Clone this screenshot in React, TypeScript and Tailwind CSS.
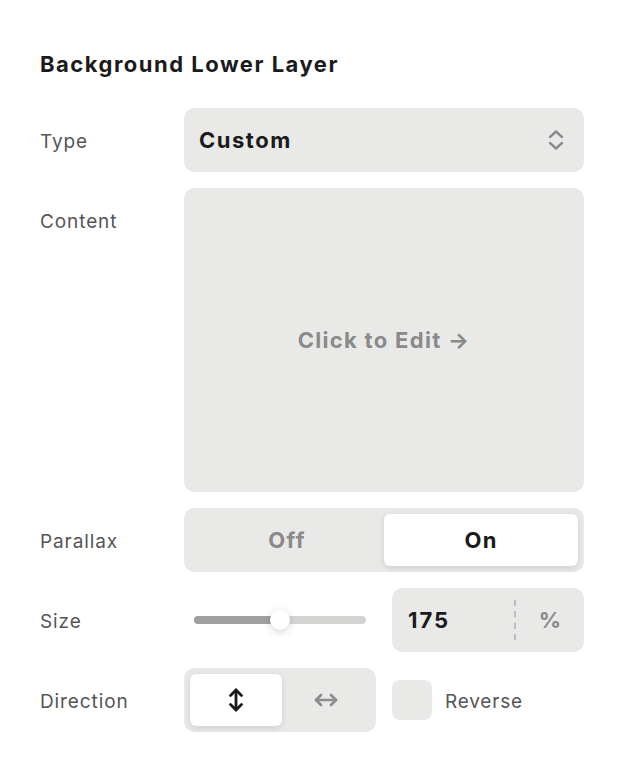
import React from "react";

const font = { fontFamily: "Inter, 'Noto Sans', sans-serif" };

function Label({ children }: { children: React.ReactNode }) {
  return <div className="w-[144px] shrink-0 pt-1 text-[19px] tracking-[0.9px] text-[#555555]">{children}</div>;
}

export default function App() {
  return (
    <div className="min-h-[782px] w-[624px] bg-white pl-10 pr-10 pt-[49px]" style={font}>
      <h1 className="text-[22px] font-bold leading-[30px] tracking-[1.5px] text-[#1b1b1b]">Background Lower Layer</h1>
      <div className="mt-[29px] flex flex-col gap-4">
        {/* Type */}
        <div className="flex items-center">
          <Label>Type</Label>
          <div className="flex h-[64px] w-[400px] items-center justify-between rounded-[10px] bg-[#e9e9e8] pl-[15px] pr-[18px]">
            <span className="text-[22px] font-bold tracking-[1.5px] text-[#1b1b1b]">Custom</span>
            <svg width="20" height="24" viewBox="0 0 20 24" fill="none" stroke="#8c8c8c" strokeWidth="2.4" strokeLinecap="round" strokeLinejoin="round">
              <path d="M4 9 L10 3.5 L16 9" />
              <path d="M4 15 L10 20.5 L16 15" />
            </svg>
          </div>
        </div>
        {/* Content */}
        <div className="flex items-start">
          <div className="pt-[16px]"><Label>Content</Label></div>
          <div className="flex h-[304px] w-[400px] items-center justify-center rounded-[10px] bg-[#e9e9e8]">
            <span className="text-[22px] font-bold tracking-[1.3px] text-[#8a8a8a]">Click to Edit →</span>
          </div>
        </div>
        {/* Parallax */}
        <div className="flex items-center">
          <Label>Parallax</Label>
          <div className="flex h-[64px] w-[400px] rounded-[10px] bg-[#e9e9e8] p-[6px]">
            <div className="flex flex-1 items-center justify-center text-[22px] font-bold tracking-[1.3px] text-[#8a8a8a]">Off</div>
            <div className="flex flex-1 items-center justify-center rounded-[6px] bg-white text-[22px] font-bold tracking-[1.3px] text-[#1b1b1b] shadow-[0_2px_6px_rgba(0,0,0,0.12)]">On</div>
          </div>
        </div>
        {/* Size */}
        <div className="flex items-center">
          <Label>Size</Label>
          <div className="flex w-[400px] items-center gap-4">
            <div className="flex h-[64px] w-[192px] items-center px-[10px]">
              <div className="relative h-[8px] w-full rounded-full bg-[#d4d4d3]">
                <div className="absolute left-0 top-0 h-[8px] w-[86px] rounded-full bg-[#a0a0a0]" />
                <div className="absolute left-[76px] top-[-6px] h-[20px] w-[20px] rounded-full bg-white shadow-[0_2px_8px_rgba(0,0,0,0.18)]" />
              </div>
            </div>
            <div className="flex h-[64px] w-[192px] items-center rounded-[10px] bg-[#e9e9e8]">
              <span className="flex-1 pl-[16px] text-[22px] font-bold tracking-[2px] text-[#1b1b1b]">175</span>
              <div className="h-[40px] border-l-2 border-dashed border-[#bdbdbd]" />
              <span className="w-[68px] text-center text-[22px] font-bold text-[#8a8a8a]">%</span>
            </div>
          </div>
        </div>
        {/* Direction */}
        <div className="flex items-center">
          <Label>Direction</Label>
          <div className="flex w-[400px] items-center gap-4">
            <div className="flex h-[64px] w-[192px] rounded-[10px] bg-[#e9e9e8] p-[6px]">
              <div className="flex w-[92px] items-center justify-center rounded-[6px] bg-white shadow-[0_2px_6px_rgba(0,0,0,0.12)]">
                <svg width="18" height="26" viewBox="0 0 18 26" fill="none" stroke="#1b1b1b" strokeWidth="2.8" strokeLinecap="round" strokeLinejoin="round">
                  <path d="M9 3 V23" />
                  <path d="M3.5 8.5 L9 3 L14.5 8.5" />
                  <path d="M3.5 17.5 L9 23 L14.5 17.5" />
                </svg>
              </div>
              <div className="flex flex-1 items-center justify-center">
                <svg width="26" height="18" viewBox="0 0 26 18" fill="none" stroke="#8c8c8c" strokeWidth="2.6" strokeLinecap="round" strokeLinejoin="round">
                  <path d="M3 9 H23" />
                  <path d="M8 4 L3 9 L8 14" />
                  <path d="M18 4 L23 9 L18 14" />
                </svg>
              </div>
            </div>
            <div className="flex items-center gap-[13px]">
              <div className="h-[40px] w-[40px] rounded-[8px] bg-[#e9e9e8]" />
              <span className="pt-1 text-[19px] tracking-[0.8px] text-[#555555]">Reverse</span>
            </div>
          </div>
        </div>
      </div>
    </div>
  );
}
